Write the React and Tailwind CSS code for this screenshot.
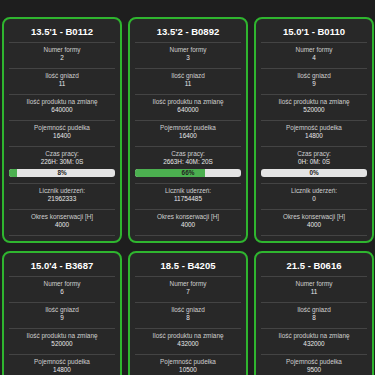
const machines = [
    { title: "13.5'1 - B0112", form: 2, nests: 11, perShift: 640000, box: 16400, time: "226H: 30M: 0S", pct: 8, hits: 21962333, service: 4000 },
    { title: "13.5'2 - B0892", form: 3, nests: 11, perShift: 640000, box: 16400, time: "2663H: 40M: 20S", pct: 66, hits: 11754485, service: 4000 },
    { title: "15.0'1 - B0110", form: 4, nests: 9, perShift: 520000, box: 14800, time: "0H: 0M: 0S", pct: 0, hits: 0, service: 4000 },
    { title: "15.0'4 - B3687", form: 6, nests: 9, perShift: 520000, box: 14800, time: "0H: 0M: 0S", pct: 0, hits: 0, service: 4000 },
    { title: "18.5 - B4205", form: 7, nests: 8, perShift: 432000, box: 10500, time: "0H: 0M: 0S", pct: 0, hits: 0, service: 4000 },
    { title: "21.5 - B0616", form: 11, nests: 8, perShift: 432000, box: 9500, time: "0H: 0M: 0S", pct: 0, hits: 0, service: 4000 },
];

const Row = ({ label, value, children }) => (
    <div className="pt-[3px] pb-[6px] border-b border-[#444444] text-center">
        <div className="text-[6.4px] leading-[8px] text-[#cfcfcf]">{label}</div>
        <div className="text-[6.4px] leading-[8px] text-[#e8e8e8]">{value}</div>
        {children}
    </div>
);

const MachineCard = ({ m }) => (
    <div className="bg-[#282828] border-2 border-[#2fb52f] rounded-[8px] px-[5px] pb-[5px]">
        <div className="pt-[7px] pb-[4px] border-b border-[#444444] text-center">
            <h2 className="text-[9.5px] leading-[12px] font-bold text-white">{m.title}</h2>
        </div>
        <Row label="Numer formy" value={m.form} />
        <Row label="Ilość gniazd" value={m.nests} />
        <Row label="Ilość produktu na zmianę" value={m.perShift} />
        <Row label="Pojemność pudełka" value={m.box} />
        <Row label="Czas pracy:" value={m.time}>
            <div className="relative mt-[3px] h-[8px] bg-[#e4e4e4] rounded-[3px] overflow-hidden">
                <div className="h-full bg-[#4cb050]" style={{ width: `${m.pct}%` }} />
                <span className="absolute inset-0 flex items-center justify-center text-[6.4px] font-bold text-[#222222]">
                    {m.pct}%
                </span>
            </div>
        </Row>
        <Row label="Licznik uderzeń:" value={m.hits} />
        <Row label="Okres konserwacji [H]" value={m.service} />
    </div>
);

export default function App() {
    return (
        <div
            className="w-[375px] h-[375px] overflow-hidden bg-[#1e1e1e] pt-[17px] pl-[2px] pr-[1px]"
            style={{ fontFamily: '"Liberation Sans", Arial, sans-serif' }}
        >
            <div className="grid grid-cols-3 gap-x-[6px] gap-y-[8px]">
                {machines.map((m) => (
                    <MachineCard key={m.title} m={m} />
                ))}
            </div>
        </div>
    );
}
